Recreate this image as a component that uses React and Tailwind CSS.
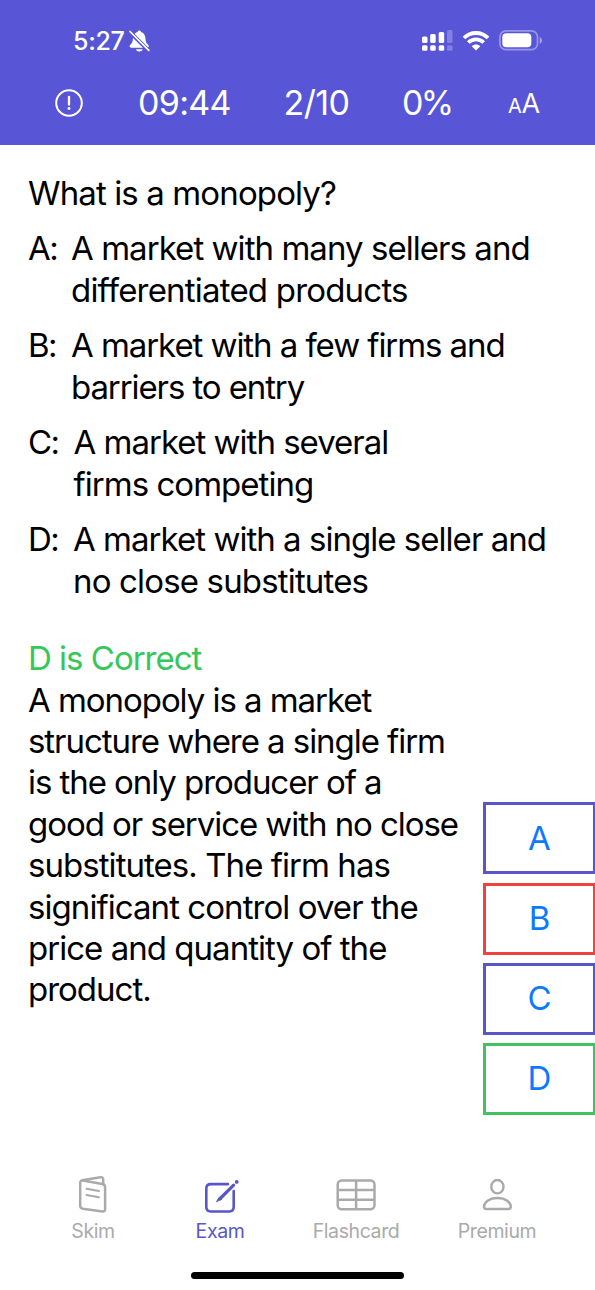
import React from 'react';

const options = [
    { letter: 'A', indent: 'w-[43px]', lines: [['A market with many sellers and', 'tracking-[-0.95px]'], ['differentiated products', 'tracking-[-0.8px]']] },
    { letter: 'B', indent: 'w-[43px]', lines: [['A market with a few firms and', 'tracking-[-1.07px]'], ['barriers to entry', 'tracking-[-1.1px]']] },
    { letter: 'C', indent: 'w-[45.500px]', lines: [['A market with several', 'tracking-[-1px]'], ['firms competing', 'tracking-[-0.97px]']] },
    { letter: 'D', indent: 'w-[45px]', lines: [['A market with a single seller and', 'tracking-[-0.97px]'], ['no close substitutes', 'tracking-[-0.84px]']] },
];

const explanation = [
    ['A monopoly is a market', 'tracking-[-1.05px]'],
    ['structure where a single firm', 'tracking-[-1.05px]'],
    ['is the only producer of a', 'tracking-[-1.06px]'],
    ['good or service with no close', 'tracking-[-1.06px]'],
    ['substitutes. The firm has', 'tracking-[-0.95px]'],
    ['significant control over the', 'tracking-[-0.94px]'],
    ['price and quantity of the', 'tracking-[-0.97px]'],
    ['product.', 'tracking-[-1px]'],
];

const answers = [
    { letter: 'A', border: 'border-[#5a55c8]' },
    { letter: 'B', border: 'border-[#ee443e]' },
    { letter: 'C', border: 'border-[#5a55c8]' },
    { letter: 'D', border: 'border-[#43c162]' },
];

const Lines = ({ lines }) => lines.map(([text, tracking]) => (
    <span key={text} className={`block whitespace-nowrap ${tracking}`}>{text}</span>
));

const BellOff = () => (
    <svg className="ml-[4px] mt-[1px]" width="21" height="22" viewBox="0 0 21 22" fill="none">
        <path d="M10.3 0.6c-.9 0-1.6.6-1.7 1.4C5.900 2.800 4.200 5 4 8c-.2 3.500-.7 5-2.200 6.300-.7.7-1.200 1.300-1.200 2 0 .8.6 1.400 1.600 1.400h16c1 0 1.600-.6 1.600-1.400 0-.7-.5-1.300-1.200-2-1.500-1.300-2-2.800-2.200-6.300-.2-3-1.700-5.200-4.400-6-.1-.8-.8-1.400-1.700-1.400Z" fill="white" />
        <path d="M7 19.200h6.600c-.3 1.300-1.500 2.300-3.300 2.300S7.300 20.500 7 19.200Z" fill="white" />
        <path d="M0.200 1.300 20 21" stroke="#5856d6" strokeWidth="4" />
        <path d="M1 1.500 19.800 20.300" stroke="white" strokeWidth="1.700" strokeLinecap="round" />
    </svg>
);

const Signal = () => (
    <svg width="32" height="22" viewBox="0 0 32 22" fill="white">
        <rect x="0" y="6.500" width="5.500" height="6.500" rx="1.500" />
        <rect x="8.200" y="4" width="5.500" height="9" rx="1.500" />
        <rect x="16.700" y="2" width="5.500" height="11" rx="1.500" />
        <rect x="25" y="0" width="5.500" height="13" rx="1.500" opacity="0.25" />
        <rect x="0" y="15.300" width="5.500" height="5.500" rx="1.500" />
        <rect x="8.200" y="15.300" width="5.500" height="5.500" rx="1.500" />
        <rect x="16.700" y="15.300" width="5.500" height="5.500" rx="1.500" />
        <rect x="25" y="15.300" width="5.500" height="5.500" rx="1.500" opacity="0.25" />
    </svg>
);

const Wifi = () => (
    <svg className="ml-[8px]" width="28" height="20" viewBox="0 0 28 20" fill="none" stroke="white">
        <path d="M2 7C8.600.3 19.400.3 26 7" strokeWidth="3.800" />
        <path d="M6.300 11.500c4.300-4.200 11.100-4.200 15.400 0" strokeWidth="3.800" />
        <path d="M14 19.500 9.700 15.200c2.400-2.200 6.200-2.200 8.600 0Z" fill="white" stroke="none" />
    </svg>
);

const Battery = () => (
    <svg className="ml-[9px]" width="44" height="21" viewBox="0 0 44 21" fill="none">
        <rect x="0.900" y="0.900" width="37.600" height="18.800" rx="6" stroke="white" strokeOpacity="0.38" strokeWidth="1.700" />
        <rect x="3.300" y="3.300" width="29" height="14" rx="4" fill="white" />
        <path d="M40.700 7v6.800c1.300-.5 2.200-1.800 2.200-3.400s-.9-2.900-2.200-3.400Z" fill="white" fillOpacity="0.45" />
    </svg>
);

const SkimIcon = () => (
    <svg width="30" height="40" viewBox="0 0 30 40" fill="none" stroke="currentColor" strokeWidth="2.500" strokeLinecap="round" strokeLinejoin="round">
        <path d="M4.900 5.500 24.400 9.100c1.700.3 2.700 1.300 2.700 3v22.200c0 1.700-1 2.500-2.700 2.200L4.900 33.700c-1.700-.3-2.700-1.300-2.700-3V7.700c0-1.700 1-2.500 2.700-2.200Z" />
        <path d="M4.200 5.300 22.500 2.300c1.700-.3 2.700.5 2.700 2.200v4.900" />
        <path d="M8.500 13.800l12.500 2.300M8.500 19.900l12.500 2.300" strokeWidth="2" />
    </svg>
);

const ExamIcon = () => (
    <svg className="overflow-visible" width="36" height="40" viewBox="0 0 36 40" fill="none" stroke="currentColor" strokeLinecap="round" strokeLinejoin="round">
        <path d="M26 9.100H8.700c-2.800 0-4.400 1.600-4.400 4.400v18.600c0 2.800 1.600 4.400 4.400 4.400h18.600c2.800 0 4.400-1.600 4.400-4.400V16" strokeWidth="2.600" />
        <path d="m31.600 10.200-13.400 13.300" strokeWidth="3.200" />
        <path d="m17 22.500-2.600 4.300 4.900-2.200Z" fill="currentColor" strokeWidth=".8" />
        <circle cx="34.700" cy="6.900" r="1.900" fill="currentColor" stroke="none" />
    </svg>
);

const FlashcardIcon = () => (
    <svg width="42" height="40" viewBox="0 0 42 40" fill="none" stroke="currentColor" strokeWidth="2.500">
        <rect x="2.700" y="5.500" width="36.800" height="28.700" rx="4" />
        <path d="M2.700 15h36.800M2.700 24.700h36.800M21.100 5.500v28.700" />
    </svg>
);

const PremiumIcon = () => (
    <svg width="32" height="40" viewBox="0 0 32 40" fill="none" stroke="currentColor" strokeWidth="2.400">
        <ellipse cx="16.400" cy="11.700" rx="6.100" ry="6.700" />
        <path d="M5.400 34h22c1.600 0 2.400-.7 2.400-2.200 0-4.500-5.200-8.800-13.400-8.800S3 27.300 3 31.800c0 1.500.8 2.200 2.400 2.200Z" />
    </svg>
);

const tabs = [
    { label: 'Skim', Icon: SkimIcon, width: 'w-[126px]' },
    { label: 'Exam', Icon: ExamIcon, width: 'w-[128px]', active: true },
    { label: 'Flashcard', Icon: FlashcardIcon, width: 'w-[144px]' },
    { label: 'Premium', Icon: PremiumIcon, width: 'w-[138px]' },
];

const App = () => {
    return (
        <div className="w-[595px] h-[1290px] flex flex-col overflow-hidden bg-white text-black font-['Inter',sans-serif]">
            {/* Status bar and exam header */}
            <header className="h-[144.5px] shrink-0 bg-[#5856d6] text-white">
                <div className="h-[80px] flex items-center pl-[73px]">
                    <span className="w-[52px] mt-[3px] whitespace-nowrap text-[25px] font-medium tracking-[-0.3px]">5:27</span>
                    <BellOff />
                    <div className="ml-[272px] mt-[1px] flex items-center">
                        <Signal />
                        <Wifi />
                        <Battery />
                    </div>
                </div>
                <div className="h-[45px] flex items-center pl-[55px] text-[34px] whitespace-nowrap">
                    <svg width="28" height="28" viewBox="0 0 28 28" fill="none" stroke="white" strokeLinecap="round">
                        <circle cx="14" cy="14" r="12.800" strokeWidth="2" />
                        <path d="M14 7.800v7.700" strokeWidth="2.300" />
                        <path d="M14 19.500v.1" strokeWidth="2.800" />
                    </svg>
                    <span className="ml-[55px] w-[145.5px] tracking-[-0.7px]">09:44</span>
                    <span className="w-[118.5px] tracking-[-0.6px]">2/10</span>
                    <span className="w-[106px] tracking-[-2.8px]">0%</span>
                    <span className="flex items-baseline mt-[3px]">
                        <span className="text-[20px] tracking-[-0.4px]">A</span>
                        <span className="text-[27px]">A</span>
                    </span>
                </div>
            </header>

            {/* Question */}
            <main className="h-[1015px] shrink-0 pl-[28px] pt-[28px] text-[33px] leading-[41.4px]">
                <h1 className="whitespace-nowrap tracking-[-0.88px]">What is a monopoly?</h1>
                <div className="mt-[14.500px] flex flex-col gap-[14.200px]">
                    {options.map(({ letter, indent, lines }) => (
                        <div key={letter} className="flex">
                            <span className={`shrink-0 tracking-[-1.500px] ${indent}`}>{letter}:</span>
                            <p><Lines lines={lines} /></p>
                        </div>
                    ))}
                </div>

                <div className="mt-[36px] flex">
                    <div className="w-[455px] shrink-0">
                        <h2 className="text-[#34c759] tracking-[-1px]">D is Correct</h2>
                        <p><Lines lines={explanation} /></p>
                    </div>
                    {/* Answer buttons */}
                    <div className="mt-[164px] flex flex-col gap-[8.300px]">
                        {answers.map(({ letter, border }) => (
                            <button key={letter} className={`w-[113px] h-[72px] border-3 text-[#0a7aff] ${border}`}>
                                {letter}
                            </button>
                        ))}
                    </div>
                </div>
            </main>

            {/* Tab bar */}
            <nav className="pt-[15px] pl-[30px] flex">
                {tabs.map(({ label, Icon, width, active }) => (
                    <div key={label} className={`flex flex-col items-center ${width} ${active ? 'text-[#5856c8]' : 'text-[#aaaaaa]'}`}>
                        <Icon />
                        <span className="mt-[4px] text-[19.500px] leading-[24px] tracking-[-0.4px]">{label}</span>
                    </div>
                ))}
            </nav>
            <div className="mt-auto mb-[11px] ml-[191px] w-[213px] h-[7px] shrink-0 rounded-full bg-black" />
        </div>
    );
};

export default App;
